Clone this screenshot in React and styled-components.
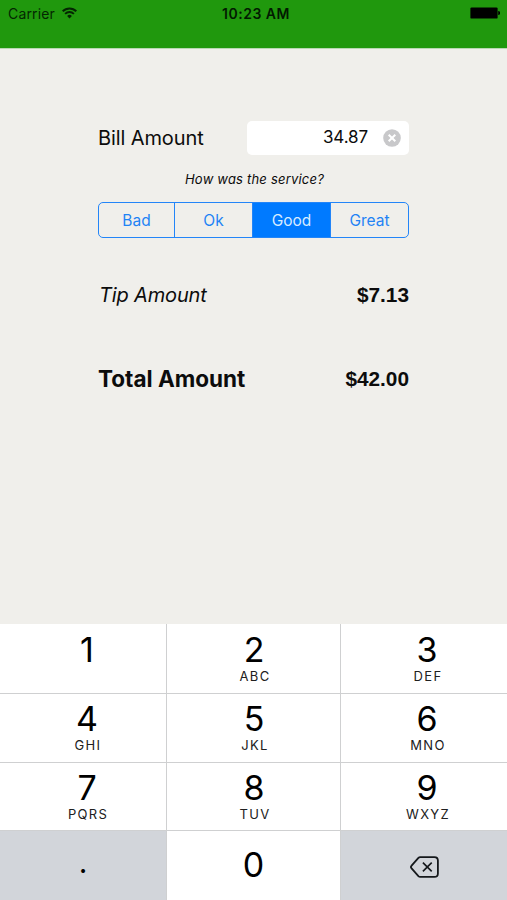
import React, { useState } from "react";
import styled, { createGlobalStyle } from "styled-components";

const RATINGS = ["Bad", "Ok", "Good", "Great"];

// shift nudges the outer columns towards the right like the system keypad does
const KEYS = [
  { digit: "1", letters: "", shift: 8, top: 7 },
  { digit: "2", letters: "ABC", shift: 1, top: 7 },
  { digit: "3", letters: "DEF", shift: 6, top: 7 },
  { digit: "4", letters: "GHI", shift: 8, top: 6 },
  { digit: "5", letters: "JKL", shift: 1, top: 6 },
  { digit: "6", letters: "MNO", shift: 6, top: 6 },
  { digit: "7", letters: "PQRS", shift: 8, top: 6 },
  { digit: "8", letters: "TUV", shift: 1, top: 6 },
  { digit: "9", letters: "WXYZ", shift: 6, top: 6 },
];

const WifiIcon = () => (
  <svg width="15" height="12" viewBox="0 0 15 12" fill="none">
    <path d="M0.7 4.2a9.6 9.6 0 0 1 13.6 0" stroke="#042602" strokeWidth="2" />
    <path d="M3.1 6.9a6.2 6.2 0 0 1 8.8 0" stroke="#042602" strokeWidth="1.9" />
    <path d="M5.1 8.9a3.5 3.5 0 0 1 4.8 0L7.5 11.5z" fill="#042602" />
  </svg>
);

const BatteryIcon = () => (
  <svg width="30" height="12" viewBox="0 0 30 12">
    <rect x="0.4" y="0.4" width="27.2" height="11.2" rx="1.2" fill="#000" />
    <path d="M28.2 4q2 0.3 2 2t-2 2z" fill="#000" />
  </svg>
);

const ClearIcon = () => (
  <svg width="18" height="18" viewBox="0 0 18 18">
    <circle cx="9" cy="9" r="8.8" fill="#c8c8ca" />
    <path d="M5.7 5.7l6.6 6.6M12.3 5.7l-6.6 6.6" stroke="#fff" strokeWidth="2" />
  </svg>
);

const DeleteIcon = () => (
  <svg width="29" height="22" viewBox="0 0 29 22" fill="none" stroke="#15181b">
    <path
      d="M10.2 1.1h14.2q3.5 0 3.5 3.5v12.8q0 3.5-3.5 3.5H10.2q-1 0-1.8-.8L1.6 12.4q-1.3-1.4 0-2.8L8.4 1.9q.8-.8 1.8-.8z"
      strokeWidth="1.8"
    />
    <path d="M12.9 6.6l8.8 8.8M21.7 6.6l-8.8 8.8" strokeWidth="1.6" />
  </svg>
);

const App = () => {
  const [rating, setRating] = useState("Good");

  return (
    <Screen>
      <GlobalStyle />
      <StatusBar>
        <Carrier>
          <span>Carrier</span>
          <WifiIcon />
        </Carrier>
        <Time>10:23 AM</Time>
        <Battery>
          <BatteryIcon />
        </Battery>
      </StatusBar>
      <Form>
        <BillRow>
          <BillLabel>Bill Amount</BillLabel>
          <BillField>
            <BillValue>34.87</BillValue>
            <ClearIcon />
          </BillField>
        </BillRow>
        <Question>How was the service?</Question>
        <Segments>
          {RATINGS.map((name) => (
            <Segment
              key={name}
              $active={name === rating}
              onClick={() => setRating(name)}
            >
              {name}
            </Segment>
          ))}
        </Segments>
        <TipRow>
          <TipLabel>Tip Amount</TipLabel>
          <Money>$7.13</Money>
        </TipRow>
        <TotalRow>
          <TotalLabel>Total Amount</TotalLabel>
          <Money>$42.00</Money>
        </TotalRow>
      </Form>
      <Keypad>
        {KEYS.map(({ digit, letters, shift, top }) => (
          <Key key={digit} $shift={shift} $top={top}>
            <Digit>{digit}</Digit>
            {letters && <Letters>{letters}</Letters>}
          </Key>
        ))}
        <FunctionKey>
          <Point>.</Point>
        </FunctionKey>
        <Key $top={15}>
          <Digit>0</Digit>
        </Key>
        <FunctionKey>
          <DeleteIcon />
        </FunctionKey>
      </Keypad>
    </Screen>
  );
};

const GlobalStyle = createGlobalStyle`
  * {
    box-sizing: border-box;
  }
  body {
    margin: 0;
    font-family: Inter, "Liberation Sans", sans-serif;
  }
  button {
    font-family: inherit;
    color: inherit;
    border: 0;
    padding: 0;
    background: none;
  }
  svg {
    display: block;
    flex: none;
  }
`;

const Screen = styled.div`
  display: flex;
  flex-direction: column;
  width: 507px;
  height: 900px;
  overflow: hidden;
  color: #0c0c0c;
  background: #f0efeb;
`;

const StatusBar = styled.header`
  display: grid;
  grid-template-columns: 1fr auto 1fr;
  align-items: start;
  height: 49px;
  padding: 4px 7px 0 8px;
  border-bottom: 1px solid #b9d8b3;
  background: #20980d;
`;

const Carrier = styled.div`
  display: flex;
  gap: 7px;
  height: 20px;
  font-size: 14px;
  line-height: 20px;
  letter-spacing: 0.15px;
  color: #042602;

  svg {
    margin-top: 3px;
  }
`;

const Time = styled.div`
  padding-left: 4px;
  font-size: 14px;
  font-weight: 600;
  line-height: 20px;
  letter-spacing: 0.5px;
  color: #021a01;
`;

const Battery = styled.div`
  display: flex;
  justify-content: flex-end;
  padding-top: 3px;
`;

const Form = styled.main`
  display: flex;
  flex-direction: column;
  flex: 1;
  padding: 72px 98px 0;
`;

const Row = styled.div`
  display: flex;
  align-items: center;
  justify-content: space-between;
`;

const BillRow = styled(Row)`
  height: 34px;
`;

const TipRow = styled(Row)`
  height: 30px;
  margin-top: 42px;
`;

const TotalRow = styled(Row)`
  height: 30px;
  margin-top: 54px;
`;

const BillLabel = styled.label`
  font-size: 20px;
  letter-spacing: -0.1px;
`;

const BillField = styled.div`
  display: flex;
  align-items: center;
  justify-content: flex-end;
  gap: 15px;
  width: 162px;
  height: 34px;
  padding-right: 8px;
  border-radius: 5px;
  background: #fff;
`;

const BillValue = styled.span`
  padding-bottom: 2px;
  font-size: 17px;
  letter-spacing: -0.1px;
`;

const Question = styled.p`
  margin: 15px 0 0;
  padding-left: 2px;
  font-size: 13px;
  font-style: italic;
  line-height: 19px;
  letter-spacing: 0.2px;
  text-align: center;
`;

const Segments = styled.div`
  display: grid;
  grid-template-columns: 75px 78px 78px 1fr;
  height: 36px;
  margin-top: 13px;
  border: 1.5px solid #2385f8;
  border-radius: 5px;
  overflow: hidden;
`;

const Segment = styled.button`
  font-size: 15.5px;
  color: ${({ $active }) => ($active ? "#d9ecff" : "#1f83f5")};
  background: ${({ $active }) => ($active ? "#007aff" : "transparent")};

  & + & {
    border-left: 1px solid #2385f8;
  }
`;

const TipLabel = styled.span`
  padding-left: 1px;
  font-size: 20px;
  font-style: italic;
  letter-spacing: -0.15px;
`;

const TotalLabel = styled.span`
  padding-bottom: 2px;
  font-size: 22.5px;
  font-weight: 700;
`;

const Money = styled.span`
  font-family: "Liberation Sans", Arial, sans-serif;
  font-size: 20.8px;
  font-weight: 700;
`;

const Keypad = styled.div`
  display: grid;
  grid-template-columns: 166px 173px 166px;
  grid-template-rows: 69px 68px 67px 69px;
  gap: 1px;
  height: 276px;
  background: #cfd0d1;
`;

const Key = styled.button`
  display: flex;
  flex-direction: column;
  align-items: center;
  justify-content: flex-start;
  padding: ${({ $top = 0, $shift = 0 }) => `${$top}px 0 0 ${$shift}px`};
  background: #fff;
`;

const FunctionKey = styled(Key)`
  justify-content: center;
  padding: 3px 0 0;
  background: #d2d5da;
`;

const Digit = styled.span`
  font-size: 34px;
  line-height: 38px;
  color: #000;
`;

const Letters = styled.span`
  padding-left: 2px;
  font-size: 13px;
  line-height: 14px;
  letter-spacing: 1.3px;
  color: #202020;
`;

const Point = styled.span`
  padding-bottom: 10px;
  font-size: 30px;
  line-height: 30px;
  color: #000;
`;

export default App;
